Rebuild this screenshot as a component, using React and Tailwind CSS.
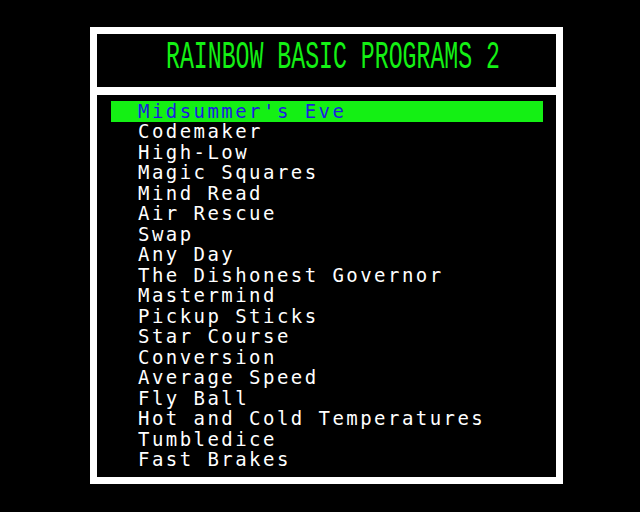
import React from 'react';

const programs = [
    "Midsummer's Eve",
    "Codemaker",
    "High-Low",
    "Magic Squares",
    "Mind Read",
    "Air Rescue",
    "Swap",
    "Any Day",
    "The Dishonest Governor",
    "Mastermind",
    "Pickup Sticks",
    "Star Course",
    "Conversion",
    "Average Speed",
    "Fly Ball",
    "Hot and Cold Temperatures",
    "Tumbledice",
    "Fast Brakes",
];

const App = () => {
    return (
        <div className="w-[640px] h-[512px] bg-black pt-[27px] pl-[90px]">
            <div className="w-[473px] h-[457px] bg-white p-[7px] flex flex-col gap-[8px]">
                <div className="h-[53px] bg-black flex items-center pl-[69px]">
                    <span
                        className="text-[#14f014] text-[23.2px] scale-y-[1.7] leading-none whitespace-pre mb-[3px]"
                        style={{ fontFamily: '"Liberation Mono", monospace' }}
                    >
                        RAINBOW BASIC PROGRAMS 2
                    </span>
                </div>
                <div className="flex-1 bg-black pt-[6px] pl-[14px] pr-[13px]">
                    {programs.map((name, i) => (
                        <div
                            key={name}
                            className={
                                i === 0
                                    ? 'h-[20.5px] bg-[#14f014] text-[#1c1ce0] pl-[27px] flex items-center'
                                    : 'h-[20.5px] text-white pl-[27px] flex items-center'
                            }
                        >
                            <span
                                className="text-[19px] tracking-[2.45px] leading-none whitespace-pre"
                                style={{ fontFamily: '"DejaVu Sans Mono", monospace' }}
                            >
                                {name}
                            </span>
                        </div>
                    ))}
                </div>
            </div>
        </div>
    );
};

export default App;
